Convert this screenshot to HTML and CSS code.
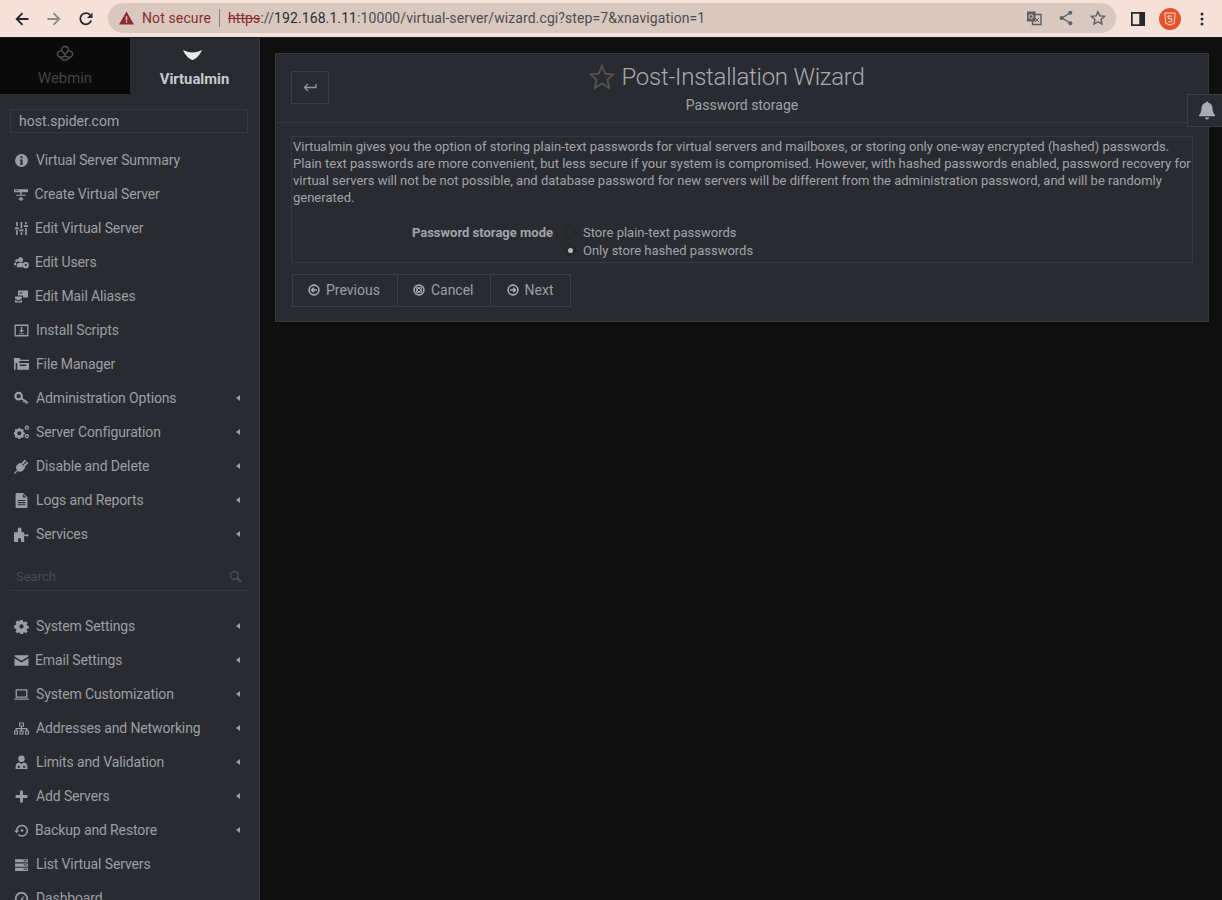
FILE: index.html
```html
<!DOCTYPE html>
<html lang="en">
<head>
<meta charset="utf-8">
<title>Post-Installation Wizard</title>
<link rel="stylesheet" href="styles.css">
</head>
<body>
<header class="chrome">
  <div class="nav-btns">
    <svg class="nav-ic" viewBox="0 0 16 16"><path d="M14.500 8H3M8.500 2.200 2.700 8l5.800 5.800" class="st-dark"/></svg>
    <svg class="nav-ic" viewBox="0 0 16 16"><path d="M1.500 8H13M7.500 2.200 13.300 8l-5.800 5.800" class="st-grey"/></svg>
    <svg class="nav-ic" viewBox="0 0 16 16"><path d="M13.200 9.500A5.600 5.600 0 1 1 12 3.900" class="st-dark"/><path d="M14.500 1.500v5.600H9z" class="fill-dark"/></svg>
  </div>
  <div class="omnibox">
    <svg class="warn" viewBox="0 0 16 14"><path d="M8 0 16 14H0z" class="fill-red"/><path d="M7.200 5h1.600v4.600H7.200zM7.200 10.500h1.600V12H7.200z" class="fill-bar"/></svg>
    <span class="not-secure">Not secure</span>
    <span class="omni-sep"></span>
    <span class="url"><s class="https">https</s><span class="url-dim">://</span>192.168.1.11<span class="url-dim">:10000/virtual-server/wizard.cgi?step=7&amp;xnavigation=1</span></span>
    <div class="omni-icons">
      <svg class="omni-ic" viewBox="0 0 16 16"><path d="M1 1.500h8.500v10H1z" class="fill-omni"/><path d="M6.500 4.500h8.500v10H6.500z" class="st-omni"/><circle cx="5" cy="6.500" r="2" class="st-light"/><path d="M9 8l4 4M13 8l-4 4" class="st-omni-thin"/></svg>
      <svg class="omni-ic" viewBox="0 0 16 16"><path d="M12 3 4 8l8 5" class="st-omni"/><circle cx="12.300" cy="2.800" r="2" class="fill-omni"/><circle cx="3.600" cy="8" r="2" class="fill-omni"/><circle cx="12.300" cy="13.200" r="2" class="fill-omni"/></svg>
      <svg class="omni-ic" viewBox="0 0 16 16"><path d="m8 1.700 1.900 4.200 4.600.5-3.400 3.100.9 4.500L8 11.700l-4 2.300.9-4.500-3.400-3.100 4.600-.5z" class="st-omni"/></svg>
    </div>
  </div>
  <div class="chrome-right">
    <svg class="panel-ic" viewBox="0 0 14 14"><path d="M0 0h14v14H0z" class="fill-dark"/><path d="M1.700 1.700h6.600v10.600H1.700z" class="fill-bar-light"/></svg>
    <span class="ext"><svg class="ext-ic" viewBox="0 0 14 16"><path d="M1 1h12l-1 12-5 2-5-2z" class="st-white"/><path d="M4.500 4.500h5M4.700 4.500l.3 3.200h4.200l-.3 3.300-2 .7-1.800-.7" class="st-white"/></svg></span>
    <svg class="dots" viewBox="0 0 4 14"><circle cx="2" cy="2" r="1.500"/><circle cx="2" cy="7" r="1.500"/><circle cx="2" cy="12" r="1.500"/></svg>
  </div>
</header>

<div class="app">
  <aside class="sidebar">
    <div class="tabs">
      <div class="tab tab-off">
        <svg class="tab-ic" viewBox="0 0 18 18"><path d="M9 1.500c2 0 3.300 1.200 3.300 3 0 .7-.1 1-.3 1.600 1.600-.5 3.800.2 4.400 2 .6 2-.6 3.900-2.900 4-1 1.900-2.600 3-4.500 3s-3.500-1.100-4.500-3C2.200 12 1 10 1.600 8.100c.6-1.800 2.800-2.500 4.400-2C5.800 5.500 5.700 5.200 5.700 4.500c0-1.800 1.300-3 3.300-3z" class="st-tab"/><path d="M6 6.100 9 9.500l3-3.400M9 9.500v1.500M4.500 12.700 9 11l4.500 1.700" class="st-tab"/></svg>
        <span class="tab-label">Webmin</span>
      </div>
      <div class="tab tab-on">
        <svg class="vm-ic" viewBox="0 0 19 10"><path d="M0 0c3 1.500 6 2.500 9.500 2.500S16 1.500 19 0C17 5 13 9 9.500 10 6 9 2 5 0 0z" class="fill-white"/></svg>
        <span class="tab-label tab-label-on">Virtualmin</span>
      </div>
    </div>
    <div class="host">host.spider.com</div>
    <nav class="menu">
      <a class="item"><svg class="ic" viewBox="0 0 14 14"><path fill-rule="evenodd" d="M7 1a6 6 0 1 1 0 12A6 6 0 0 1 7 1zM6 3v2h2V3zM5.500 6v1H6v3h-.5v1h3v-1H8V6z"/></svg><span class="t">Virtual Server Summary</span></a>
      <a class="item"><svg class="ic" viewBox="0 0 14 14"><path fill-rule="evenodd" d="M0 2h13v3H0zM1 3v.8h3V3zM5.800 5h1.400v2H5.800zM2 7.200h9v1H2zM5.800 9h1.400v1.500h1.500v1.300H7.200V13H5.800v-1.200H4.300v-1.300h1.500z"/></svg><span class="t t-n">Create Virtual Server</span></a>
      <a class="item"><svg class="ic" viewBox="0 0 14 14"><path d="M2 1h1.500v4H2zM.8 6h3.900v1.600H.8zM2 8.500h1.500V13H2zM6.200 1h1.500v6H6.200zM5 8h3.900v1.600H5zM6.200 10.500h1.500V13H6.200zM10.400 1h1.500v2h-1.500zM9.200 4h3.900v1.600H9.200zM10.400 6.500h1.500V13h-1.500z"/></svg><span class="t t-m">Edit Virtual Server</span></a>
      <a class="item"><svg class="ic" viewBox="0 0 16 14"><circle cx="7" cy="4" r="2.700"/><circle cx="2.800" cy="5" r="1.500"/><path d="M3 12V9.500C3 8 4.500 7.200 7 7.200c1 0 1.800.1 2.500.4V12zM0 10V8.500C0 7.700.8 7 2.300 7v3z"/><path fill-rule="evenodd" d="M12.500 6.500a3.300 3.300 0 1 1 0 6.600 3.300 3.300 0 0 1 0-6.600zm0 2.100a1.200 1.200 0 1 0 0 2.400 1.200 1.200 0 0 0 0-2.400z"/></svg><span class="t t-m">Edit Users</span></a>
      <a class="item"><svg class="ic" viewBox="0 0 15 14"><path fill-rule="evenodd" d="M4 1h10v7H9V6H4zM5.500 3v1h3V3z"/><path d="M1 7h7v2L4.500 11 1 9zM1 10.200l3.500 2 3.500-2V13H1z"/></svg><span class="t t-m">Edit Mail Aliases</span></a>
      <a class="item"><svg class="ic" viewBox="0 0 14 14"><path fill-rule="evenodd" d="M.5 1.500h13v11H.5zM1.700 2.700v8.600h10.600V2.700z"/><path d="M6.300 3.500h1.400v3.200h1.700L7 9.200 4.600 6.700h1.700zM4.500 9.700h5v.9h-5z"/></svg><span class="t">Install Scripts</span></a>
      <a class="item"><svg class="ic" viewBox="0 0 14 14"><path d="M0 1h5l1 1.500h8v1.300H5.500L4.500 5.500H1.500V12H0z"/><path fill-rule="evenodd" d="M3 5.500h11V12H3zM5.500 7v1.500h6V7z"/></svg><span class="t">File Manager</span></a>
      <a class="item"><svg class="ic" viewBox="0 0 14 14"><circle cx="4.300" cy="4.800" r="3" class="st-ic2"/><path d="m6.800 6.800 6 4.200M10 9l-1.200 1.600M12.200 10.600l-1 1.400" class="st-ic15"/></svg><span class="t">Administration Options</span><i class="caret"></i></a>
      <a class="item"><svg class="ic" viewBox="0 0 14 14"><path fill-rule="evenodd" d="m4 2.700 1.800 0 .3 1.100.8.400 1-.6 1.300 1.300-.6 1 .4.800 1.100.3v1.800l-1.100.3-.4.8.6 1-1.300 1.300-1-.6-.8.400-.3 1.100H4l-.3-1.100-.8-.4-1 .6L.6 10.800l.6-1-.4-.8L-.3 8.700V6.900L.8 6.600l.4-.8-.6-1 1.300-1.300 1 .6.8-.4zM4.900 5.800a2 2 0 1 0 0 4 2 2 0 0 0 0-4z"/><path fill-rule="evenodd" d="M12 .5a2 2 0 1 1 0 4 2 2 0 0 1 0-4zm0 1.200a.8.8 0 1 0 0 1.600.8.8 0 0 0 0-1.600zM12 8.500a2 2 0 1 1 0 4 2 2 0 0 1 0-4zm0 1.200a.8.8 0 1 0 0 1.600.8.8 0 0 0 0-1.600z"/></svg><span class="t">Server Configuration</span><i class="caret"></i></a>
      <a class="item"><svg class="ic" viewBox="0 0 14 14"><path d="M5.500 3.500l5 5L8 11c-1.500 1.500-3.500 1-4.500 0L1 14l-1-1 2.800-2.800c-1-1-1.500-3 0-4.500z"/><path d="M7 5l3.800-3.800M9 7l3.800-3.800" class="st-ic18"/></svg><span class="t">Disable and Delete</span><i class="caret"></i></a>
      <a class="item"><svg class="ic" viewBox="0 0 14 14"><path fill-rule="evenodd" d="M1.500 0h7L12.500 4v10h-11zM8.300 1v3.200h3.200zM3.500 6.500v1h7v-1zM3.500 8.500v1h7v-1zM3.500 10.500v1h7v-1z"/></svg><span class="t">Logs and Reports</span><i class="caret"></i></a>
      <a class="item"><svg class="ic" viewBox="0 0 14 14"><path d="M0 5h3.500V2.500C3.500 1 4.500.5 5.200.5S7 1 7 2.500V5h2.500v2.300h1c1 0 1.200-.5 2-.5s1 .5 1 1-.2 1-1 1-1-.5-2-.5h-1V14H6.500v-2.500c0-.8-.5-1.300-1.300-1.300s-1.300.5-1.300 1.300V14H0z"/></svg><span class="t">Services</span><i class="caret"></i></a>
    </nav>
    <div class="search">
      <span class="search-t">Search</span>
      <svg class="search-ic" viewBox="0 0 14 14"><circle cx="5.800" cy="5.800" r="4.200" class="st-search"/><path d="m9 9 4 4" class="st-search-b"/></svg>
    </div>
    <nav class="menu menu-2">
      <a class="item"><svg class="ic" viewBox="0 0 14 14"><path fill-rule="evenodd" d="m5.800 1h2.400l.3 1.600 1 .4L11 2.100l1.700 1.700-.9 1.400.4 1 1.600.3v2.400l-1.600.3-.4 1 .9 1.400-1.700 1.700-1.400-.9-1 .4-.3 1.600H5.800l-.3-1.600-1-.4-1.400.9-1.700-1.700.9-1.400-.4-1-1.600-.3V5.800l1.600-.3.4-1-.9-1.400L3.100 1.300l1.400.9 1-.4zM7 5a2 2 0 1 0 0 4 2 2 0 0 0 0-4z"/></svg><span class="t">System Settings</span><i class="caret"></i></a>
      <a class="item"><svg class="ic" viewBox="0 0 14 14"><path d="M.5 2h13v1.300L7 7.300.5 3.300zM.5 4.800 7 8.800l6.500-4V12H.5z"/></svg><span class="t t-m">Email Settings</span><i class="caret"></i></a>
      <a class="item"><svg class="ic" viewBox="0 0 14 14"><path fill-rule="evenodd" d="M1.500 2h11v8h-11zM2.700 3.200v5.600h8.600V3.200zM.3 10.800h13.400V12H.3z"/></svg><span class="t">System Customization</span><i class="caret"></i></a>
      <a class="item"><svg class="ic" viewBox="0 0 15 14"><path fill-rule="evenodd" d="M5 1h5v4H8v1.500h5.500V9H15v4h-4V9h1.300V7.700H8V9h1.500v4h-4V9H7V7.700H2.700V9H4v4H0V9h1.500V6.500H7V5H5zM6 2v2h3V2zM1 10v2h2v-2zM6.500 10v2h2v-2zM12 10v2h2v-2z"/></svg><span class="t">Addresses and Networking</span><i class="caret"></i></a>
      <a class="item"><svg class="ic" viewBox="0 0 14 14"><circle cx="7" cy="3.500" r="3"/><path fill-rule="evenodd" d="M4.800 7 7 8.500 9.200 7c1.800.3 3.300 1.500 3.300 3.500V13h-11v-2.500C1.500 8.500 3 7.300 4.800 7zM3.500 10v2h2v-2zM8.500 10v2h2v-2z"/></svg><span class="t">Limits and Validation</span><i class="caret"></i></a>
      <a class="item"><svg class="ic" viewBox="0 0 14 14"><path d="M5.700 1.500h2.600v4.200h4.200v2.600H8.300v4.200H5.700V8.300H1.500V5.700h4.200z"/></svg><span class="t">Add Servers</span><i class="caret"></i></a>
      <a class="item"><svg class="ic" viewBox="0 0 15 14"><path d="M0 7 2 7a6 6 0 1 1 1.800 4.500l1-1A4.500 4.500 0 1 0 3.500 7l1.700 0L2.500 9.800z"/><circle cx="8" cy="7" r="1.300"/></svg><span class="t t-m">Backup and Restore</span><i class="caret"></i></a>
      <a class="item"><svg class="ic" viewBox="0 0 14 14"><path fill-rule="evenodd" d="M1 2h12v3H1zM9 3v1h3V3zM1 6h12v3H1zM9 7v1h3V7zM1 10h12v3H1zM9 11v1h3v-1z"/></svg><span class="t">List Virtual Servers</span></a>
      <a class="item"><svg class="ic" viewBox="0 0 14 14"><path fill-rule="evenodd" d="M7 1a6 6 0 0 1 5 9.500H2A6 6 0 0 1 7 1zm0 1.500A4.500 4.500 0 0 0 3 9h8a4.500 4.500 0 0 0-4-6.500z"/><path d="M6 8 10 4l-2.500 5z"/></svg><span class="t">Dashboard</span></a>
    </nav>
  </aside>

  <main class="content">
    <section class="panel">
      <div class="panel-head">
        <button class="back" type="button"><svg class="back-ic" viewBox="0 0 14 10"><path d="M13 1v3.500H1.500M5 1 1.500 4.500 5 8" class="st-back"/></svg></button>
        <div class="titles">
          <h1 class="title"><svg class="star" viewBox="0 0 26 26"><path d="m13 2 3.300 7.600 8.200.8-6.200 5.400 1.900 8.100L13 19.600l-7.200 4.300 1.900-8.100L1.500 10.400l8.200-.8z" class="st-star"/></svg>Post-Installation Wizard</h1>
          <p class="sub">Password storage</p>
        </div>
      </div>
      <div class="panel-body">
        <div class="box">
          <p class="desc">Virtualmin gives you the option of storing plain-text passwords for virtual servers and mailboxes, or storing only one-way encrypted (hashed) passwords. Plain text passwords are more convenient, but less secure if your system is compromised. However, with hashed passwords enabled, password recovery for virtual servers will not be not possible, and database password for new servers will be different from the administration password, and will be randomly generated.</p>
          <div class="field">
            <div class="field-label">Password storage mode</div>
            <div class="radios">
              <div class="radio-row"><span class="radio"></span>Store plain-text passwords</div>
              <div class="radio-row"><span class="radio radio-on"></span>Only store hashed passwords</div>
            </div>
          </div>
        </div>
        <div class="btns">
          <button class="btn btn-first" type="button"><svg class="btn-ic" viewBox="0 0 12 12"><circle cx="6" cy="6" r="4.900" class="st-btn"/><path d="M9 6H4M5.800 3.800 3.600 6l2.200 2.200" class="st-btn"/></svg>Previous</button>
          <button class="btn" type="button"><svg class="btn-ic" viewBox="0 0 12 12"><circle cx="6" cy="6" r="4.900" class="st-btn"/><path d="M3.200 3.200h5.600v5.600H3.200z" class="fill-btn"/><path d="m4.500 4.500 3 3m0-3-3 3" class="st-btn-dark"/></svg>Cancel</button>
          <button class="btn btn-last" type="button"><svg class="btn-ic" viewBox="0 0 12 12"><circle cx="6" cy="6" r="4.900" class="st-btn"/><path d="M3 6h5M6.200 3.800 8.400 6 6.200 8.200" class="st-btn"/></svg>Next</button>
        </div>
      </div>
    </section>
    <div class="bell"><svg class="bell-ic" viewBox="0 0 18 18"><path d="M9 0c.8 0 1.300.6 1.300 1.300 2.700.6 4.200 2.700 4.200 5.500 0 3.500.8 5 2.500 6.700v1.300H1v-1.300c1.700-1.700 2.500-3.200 2.500-6.700 0-2.800 1.500-4.900 4.200-5.500C7.700.6 8.200 0 9 0zM7 16h4c0 1.200-.9 2-2 2s-2-.8-2-2z"/></svg></div>
  </main>
</div>
</body>
</html>
```
FILE: styles.css
```css
* { box-sizing: border-box; }
html, body { margin: 0; height: 100%; overflow: hidden; }
body { background: #0f0f0f; font-family: Roboto, "Liberation Sans", sans-serif; color: #a0a4aa; display: flex; flex-direction: column; }

/* browser bar */
.chrome { flex: 0 0 38px; height: 38px; background: #f6e1da; display: flex; align-items: center; padding: 0; border-bottom: 1px solid #1d1d1f; }
.nav-btns { display: flex; align-items: center; gap: 16px; padding-left: 14px; width: 108px; flex: none; }
.nav-ic { width: 16px; height: 16px; flex: none; }
.st-dark { fill: none; stroke: #26282c; stroke-width: 1.900; }
.st-grey { fill: none; stroke: #8f8a88; stroke-width: 1.900; }
.fill-dark { fill: #26282c; }
.omnibox { width: 1008px; flex: none; height: 30px; margin-top: -1px; border-radius: 15px; background: #d8c8c0; display: flex; align-items: center; padding: 0 9px 0 11px; font-size: 14px; color: #2c2d30; white-space: nowrap; letter-spacing: .12px; }
.warn { width: 15px; height: 14px; flex: none; margin-right: 8px; }
.fill-red { fill: #8f2a2c; }
.fill-bar { fill: #d8c8c0; }
.not-secure { color: #8f2a2c; }
.omni-sep { width: 1px; height: 18px; background: #8b807b; margin: 0 8px; }
.url { letter-spacing: .09px; }
.https { color: #8f2a2c; }
.url-dim { color: #4e4d4e; }
.omni-icons { margin-left: auto; display: flex; gap: 16px; align-items: center; padding-right: 1px; }
.omni-ic { width: 16px; height: 16px; }
.fill-omni { fill: #5e5f61; }
.st-omni { fill: none; stroke: #5e5f61; stroke-width: 1.400; }
.st-omni-thin { fill: none; stroke: #5e5f61; stroke-width: 1; }
.st-light { fill: none; stroke: #d8c8c0; stroke-width: 1; }
.chrome-right { display: flex; align-items: center; margin-left: 15px; }
.panel-ic { width: 14px; height: 14px; margin-right: 14px; }
.fill-bar-light { fill: #f6e1da; }
.ext { width: 22px; height: 22px; border-radius: 50%; background: #e9512a; display: flex; align-items: center; justify-content: center; margin-right: 19px; }
.ext-ic { width: 12px; height: 14px; }
.st-white { fill: none; stroke: #fff; stroke-width: 1; }
.dots { width: 4px; height: 14px; fill: #26282c; }

/* app */
.app { flex: 1; min-height: 0; display: flex; }
.sidebar { flex: 0 0 260px; width: 260px; background: #2a2b30; border-right: 1px solid #37383d; overflow: hidden; }
.tabs { display: flex; height: 56px; }
.tab { display: flex; flex-direction: column; align-items: center; }
.tab-off { width: 130px; background: #0a0a0a; padding-top: 7px; }
.tab-on { flex: 1; padding-top: 12px; }
.tab-ic { width: 18px; height: 18px; display: block; }
.vm-ic { width: 19px; height: 10px; display: block; margin-left: -4px; }
.st-tab { fill: none; stroke: #4c4d51; stroke-width: 1.500; }
.fill-white { fill: #e6e8ea; }
.tab-label { font-size: 14.800px; line-height: 16px; color: #434448; margin-top: 7px; }
.tab-label-on { color: #c6cbd0; font-weight: 700; margin-top: 11px; }
.host { margin: 15px 11px 0 10px; height: 24px; border: 1px solid #37383d; font-size: 14px; line-height: 22px; padding-left: 8px; color: #a0a4aa; }
.menu { display: flex; flex-direction: column; margin-top: 10px; }
.menu-2 { margin-top: 18px; }
.item { height: 34px; display: flex; align-items: center; padding-left: 14px; font-size: 14px; letter-spacing: -.13px; color: #9b9fa5; white-space: nowrap; }
.ic { width: 15px; height: 15px; flex: none; fill: #9b9fa5; margin-right: 7px; }
.st-ic2 { fill: none; stroke: #9b9fa5; stroke-width: 2; }
.st-ic15 { fill: none; stroke: #9b9fa5; stroke-width: 1.600; }
.st-ic18 { fill: none; stroke: #9b9fa5; stroke-width: 1.800; }
.t-n { margin-left: -1.500px; }
.t-m { margin-left: -1px; }
.caret { margin-left: auto; margin-right: 19px; width: 0; height: 0; border: 3px solid transparent; border-left-width: 0; border-right: 4px solid #9b9fa5; }
.search { margin: 8px 11px 0 10px; height: 32px; border-bottom: 1px solid #37383d; display: flex; align-items: center; justify-content: space-between; padding: 3px 6px 0 6px; }
.search-t { font-size: 13px; color: #494a4f; }
.search-ic { width: 13px; height: 13px; }
.st-search { fill: none; stroke: #494a4f; stroke-width: 1.800; }
.st-search-b { fill: none; stroke: #494a4f; stroke-width: 2.400; }

/* content */
.content { flex: 1; min-width: 0; padding: 15px 13px 0 15px; position: relative; }
.panel { background: #2a2b30; border: 1px solid #37383d; height: 269px; display: flex; flex-direction: column; }
.panel-head { height: 69px; border-bottom: 1px solid #37383d; display: flex; padding: 17px 15px 0; position: relative; flex: none; }
.back { width: 38px; height: 33px; background: transparent; border: 1px solid #3c3d42; padding: 0; display: flex; align-items: center; justify-content: center; flex: none; }
.back-ic { width: 14px; height: 10px; }
.st-back { fill: none; stroke: #93979d; stroke-width: 1.300; }
.titles { position: absolute; left: 0; right: 0; top: 6px; text-align: center; }
.title { margin: 0; font-size: 24px; letter-spacing: -.25px; line-height: 34px; font-weight: 300; color: #a5abb2; display: flex; align-items: center; justify-content: center; padding-left: 2px; }
.star { width: 26px; height: 26px; margin-left: -32px; margin-right: 6px; }
.st-star { fill: none; stroke: #55565b; stroke-width: 1.700; }
.sub { margin: 1px 0 0; font-size: 14px; line-height: 20px; color: #a0a4aa; }
.panel-body { padding: 13px 15px 0; }
.box { border: 1px solid #37383d; height: 127px; padding: 1px 1px 0; }
.desc { margin: 0; font-size: 13px; line-height: 17px; color: #a0a4aa; }
.field { display: flex; margin-top: 17px; font-size: 13px; }
.field-label { width: 260px; text-align: right; font-weight: 700; line-height: 18px; padding-top: 1px; color: #a0a4aa; }
.radios { margin-left: 11px; }
.radio-row { display: flex; align-items: center; height: 18px; color: #a0a4aa; }
.radio { width: 12px; height: 12px; border-radius: 50%; border: 1px solid #222327; background: transparent; margin-right: 7px; display: flex; align-items: center; justify-content: center; flex: none; }
.radio-on::after { content: ""; width: 5px; height: 5px; border-radius: 50%; background: #b5b8bc; }
.btns { display: flex; margin-top: 11px; margin-left: 1px; }
.btn { height: 33px; background: transparent; border: 1px solid #3c3d42; margin-right: -1px; font-family: inherit; font-size: 14px; color: #9b9fa5; padding: 0 16px 1px 15px; display: flex; align-items: center; }
.btn-first { padding-right: 17px; }
.btn-last { padding-left: 16px; padding-right: 17px; }
.btn-ic { width: 12px; height: 12px; margin-right: 6px; }
.st-btn { fill: none; stroke: #a6aaaf; stroke-width: 1.600; }
.fill-btn { fill: #a6aaaf; }
.st-btn-dark { fill: none; stroke: #2a2b30; stroke-width: 1; }
.bell { position: absolute; right: 0; top: 56px; width: 35px; height: 33px; background: #2a2b30; border: 1px solid #3c3d42; border-right: 0; display: flex; align-items: center; justify-content: center; padding-left: 4px; }
.bell-ic { width: 18px; height: 19px; fill: #a8adb4; }
```
